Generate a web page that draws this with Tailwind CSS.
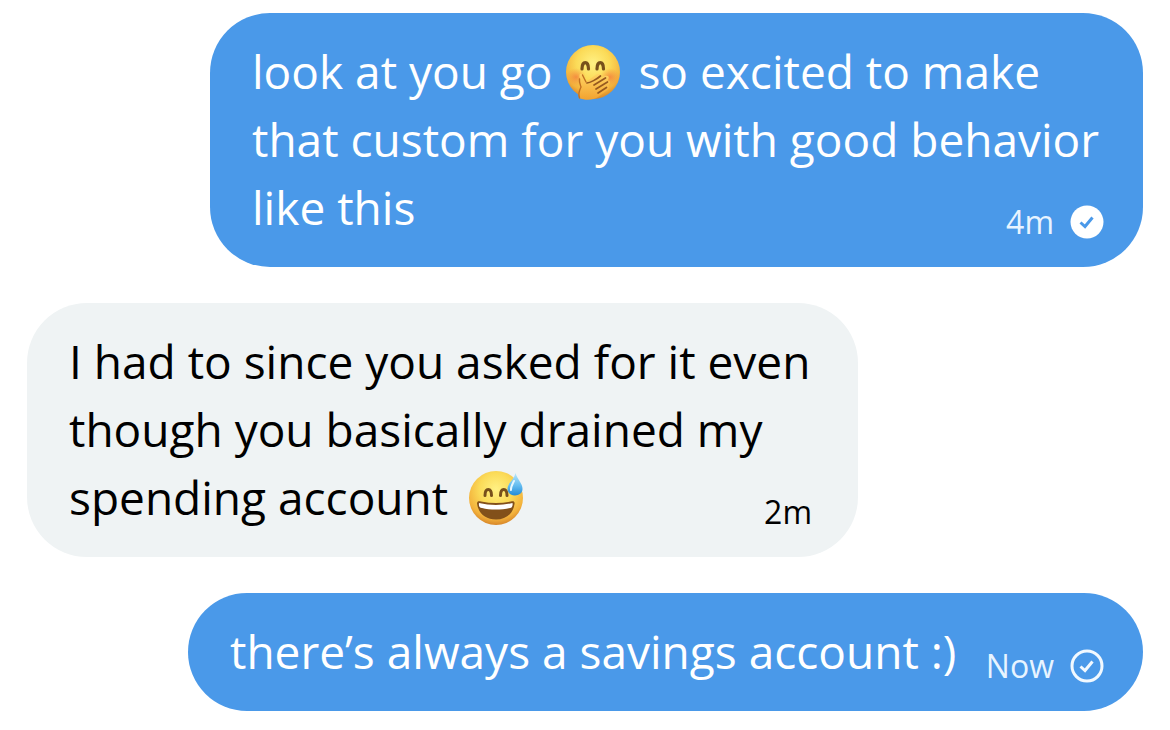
<!DOCTYPE html>
<html lang="en">
<head>
<meta charset="utf-8">
<meta name="viewport" content="width=device-width, initial-scale=1">
<title>Messages</title>
<script src="https://cdn.jsdelivr.net/npm/@tailwindcss/browser@4"></script>
</head>
<body class="bg-white font-['Open_Sans','Noto_Sans',sans-serif]">
<main class="flex flex-col gap-9 pt-[13px] px-[27px] text-[46px] leading-[68px]">

  <article class="self-end w-[933px] max-w-full rounded-[60px] bg-[#4a99e9] text-white pt-6 pb-[26px] pl-[42px] pr-[39px]">
    <p class="whitespace-nowrap">look at you go
      <svg role="img" aria-label="giggling face with hand over mouth" class="inline-block size-[56px] ml-px mr-[5px] align-[-11px]" viewBox="0 0 56 56">
        <defs>
          <radialGradient id="face" cx="0.5" cy="0.34" r="0.68">
            <stop offset="0" stop-color="#fff184"/><stop offset="0.45" stop-color="#fbdb58"/><stop offset="0.8" stop-color="#f3b23c"/><stop offset="1" stop-color="#d37f25"/>
          </radialGradient>
          <radialGradient id="blush"><stop offset="0" stop-color="#f3743a" stop-opacity="0.7"/><stop offset="1" stop-color="#f4853c" stop-opacity="0"/></radialGradient>
          <linearGradient id="hand" x1="0" y1="0" x2="0" y2="1"><stop offset="0" stop-color="#ffd564"/><stop offset="1" stop-color="#f2a22f"/></linearGradient>
        </defs>
        <circle cx="28" cy="28" r="27" fill="url(#face)"/>
        <ellipse cx="11" cy="33" rx="10" ry="9" fill="url(#blush)"/>
        <ellipse cx="45" cy="33" rx="10" ry="9" fill="url(#blush)"/>
        <path d="M17 25C17 16.500 23.500 16.500 23.500 25M32 25C32 16.500 38.500 16.500 38.500 25" fill="none" stroke="#77501b" stroke-width="3.200" stroke-linecap="round"/>
        <path d="M14 54C13 50 14 46 16 43L14.500 33C14 29 17 29 18.500 32L21 38L31 30.500C34.500 28.500 37 31 34.500 34L40 32C44 31 45 34 42 37C45.500 36 46 39 43 41.500C45 42 44 45 41 47L33 53C28 56.500 20 56.500 14 54Z" fill="url(#hand)"/>
        <path d="M22 39C25 39 32 35 35.500 32M29 41L40.500 34M31 45L42.500 38M33 49L41.500 43.500" fill="none" stroke="#96591f" stroke-width="1.700" stroke-linecap="round"/>
        <path d="M14.500 35C14 38 15 40 16 43C14 47 13 50 14.500 54M17.500 31L21 38" fill="none" stroke="#c07023" stroke-width="1.400" stroke-linecap="round"/>
      </svg>
      so excited to make<br>that custom for you with good behavior</p>
    <div class="flex items-end justify-between">
      <p>like this</p>
      <div class="flex items-center gap-4 text-[32px] leading-[38px] text-[#e8f4ff]">
        <time>4m</time>
        <svg role="img" aria-label="Read" class="size-[34px]" viewBox="0 0 34 34"><circle cx="17" cy="17" r="16.500" fill="#fff"/><path d="M10.500 17.500L15 21.500L22.500 12.500" fill="none" stroke="#4a99e9" stroke-width="3"/></svg>
      </div>
    </div>
  </article>

  <article class="self-start w-[831px] max-w-full rounded-[60px] bg-[#eff3f4] text-black pt-6 pb-[26px] pl-[42px] pr-[46px]">
    <p class="whitespace-nowrap">I had to since you asked for it even<br>though you basically drained my</p>
    <div class="flex items-end justify-between">
      <p class="whitespace-nowrap">spending account
        <svg role="img" aria-label="grinning face with sweat" class="inline-block size-[56px] ml-2 align-[-11px]" viewBox="0 0 56 56">
          <defs>
            <linearGradient id="drop" x1="0" y1="0" x2="0" y2="1"><stop offset="0" stop-color="#b9e7fb"/><stop offset="0.55" stop-color="#65bdf0"/><stop offset="1" stop-color="#238bd8"/></linearGradient>
          </defs>
          <circle cx="28" cy="28" r="27" fill="url(#face)"/>
          <path d="M17 25.500C17 17.500 23.500 17.500 23.500 25.500M32.500 25.500C32.500 17.500 39 17.500 39 25.500" fill="none" stroke="#77501b" stroke-width="3" stroke-linecap="round"/>
          <path d="M9 33.500C9 31 11 31 13 31.500C23 33.500 33 33.500 43 31.500C45 31 47 31 46.500 34C45 44 38 49.500 28 49.500C18 49.500 10.500 44 9 33.500Z" fill="#82501a"/>
          <path d="M11 33C22 35.500 34 35.500 44.500 33C45 36 44 37.500 42 38C33 40 22 40 14 38C11.500 37.500 10.500 36 11 33Z" fill="#fff"/>
          <path d="M47.500 3C46 10 39.500 13 39.500 19C39.500 27.500 54.500 27.500 54.500 19C54.500 13 49.500 10 47.500 3Z" fill="url(#drop)"/>
          <path d="M46 11C44 15 42.500 17 43 20" fill="none" stroke="#e4f7ff" stroke-width="2" stroke-linecap="round"/>
        </svg>
      </p>
      <time class="text-[32px] leading-[38px]">2m</time>
    </div>
  </article>

  <article class="self-end flex items-end justify-between w-[955px] max-w-full rounded-[60px] bg-[#4a99e9] text-white pt-6 pb-[26px] pl-[42px] pr-[39px]">
    <p class="whitespace-nowrap">there’s always a savings account :)</p>
    <div class="flex items-center gap-4 text-[32px] leading-[38px] text-[#e8f4ff]">
      <time>Now</time>
      <svg role="img" aria-label="Sent" class="size-[34px]" viewBox="0 0 34 34" fill="none" stroke="#f2f9ff" stroke-width="3"><circle cx="17" cy="17" r="15"/><path d="M10.500 17.500L15 21.500L22.500 12.500"/></svg>
    </div>
  </article>

</main>
</body>
</html>
